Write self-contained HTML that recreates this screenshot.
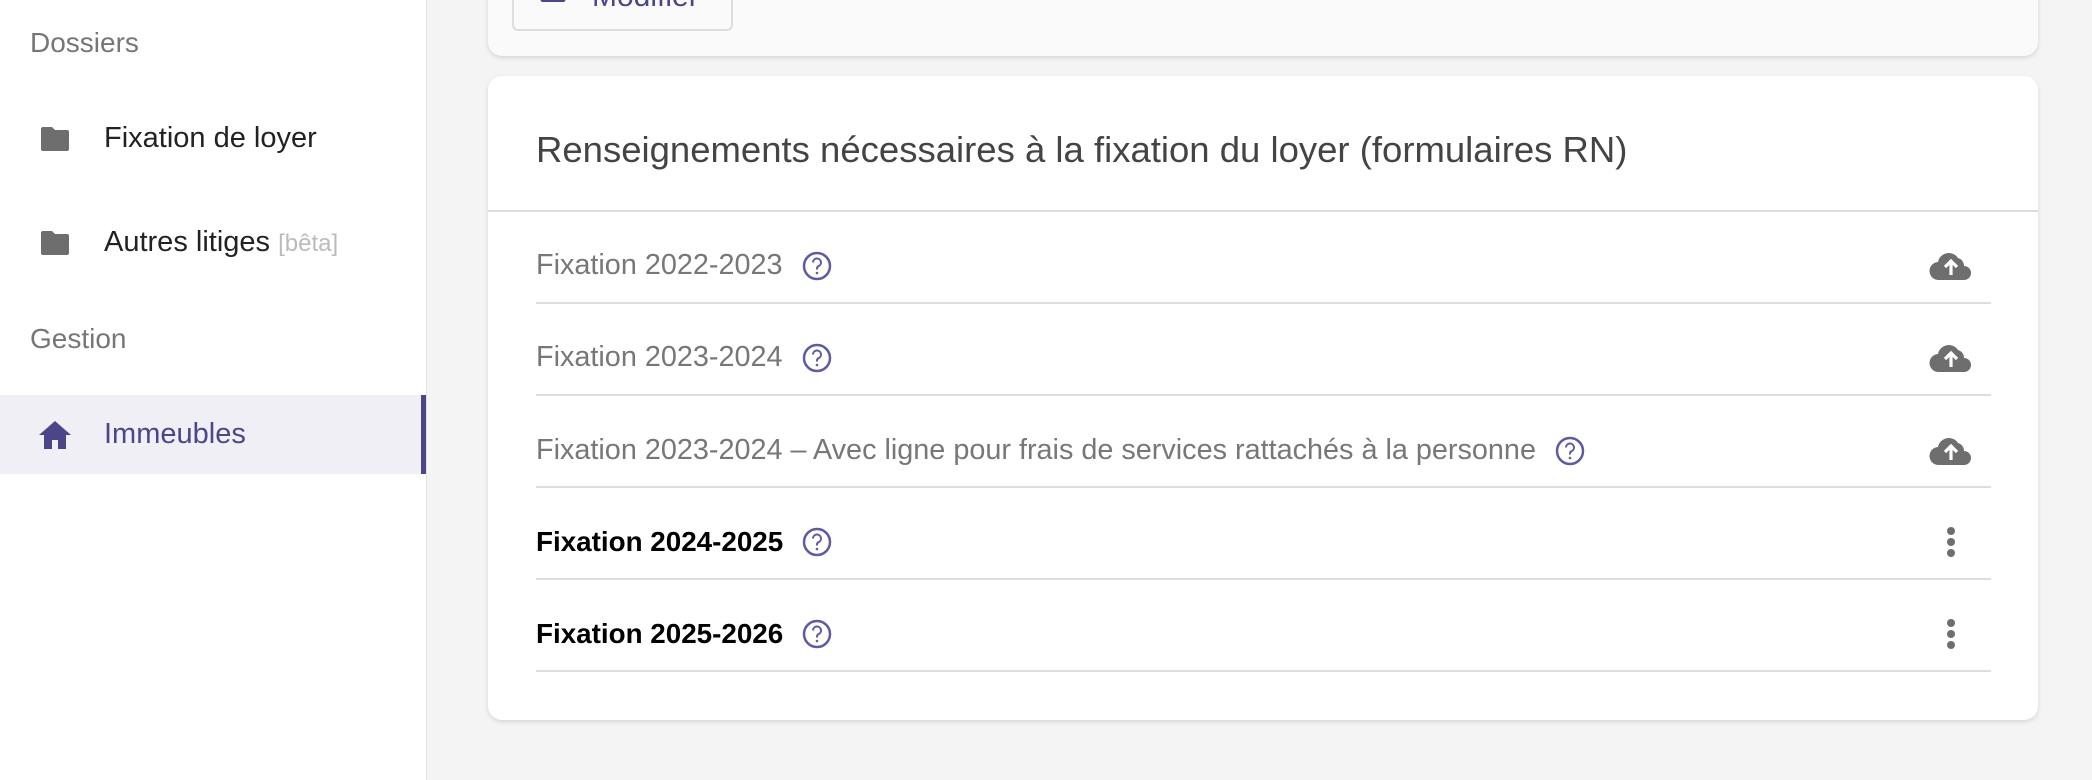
<!DOCTYPE html>
<html><head><meta charset="utf-8"><style>
*{margin:0;padding:0;box-sizing:border-box}
body{width:2092px;height:780px;overflow:hidden;background:#f4f4f4;font-family:"Liberation Sans",sans-serif;position:relative}
.side{position:absolute;left:0;top:0;width:427px;height:780px;background:#fff;border-right:1px solid #e2e2e2}
.abs{position:absolute;white-space:nowrap}
.sec{color:#767676;font-size:28px;left:30px}
.item{color:#222;font-size:29px;left:104px}
.active{position:absolute;left:0;top:395px;width:426px;height:79px;background:#f0eff5;border-right:5px solid #4a4688}
.card1{position:absolute;left:488px;top:-20px;width:1550px;height:76px;background:#fafafa;border-radius:14px;box-shadow:0 2px 5px rgba(0,0,0,.12)}
.btn{position:absolute;left:24px;top:0;width:221px;height:51px;border:2px solid #ddd;border-radius:6px}
.card2{position:absolute;left:488px;top:76px;width:1550px;height:644px;background:#fff;border-radius:14px;box-shadow:0 2px 5px rgba(0,0,0,.12)}
.hd{position:absolute;left:48px;top:53px;font-size:36.5px;color:#444}
.hline{position:absolute;left:0;top:134px;width:1550px;height:2px;background:#ddd}
.row{position:absolute;left:48px;width:1455px;height:2px;background:#ddd}
.t{position:absolute;left:48px;font-size:28.8px;color:#777;white-space:nowrap;display:flex;align-items:center}
.t.b{color:#000;font-weight:bold;font-size:27.8px}
.q{display:inline-block;width:30px;height:30px;margin-left:19px}
.ic{position:absolute}
</style></head><body>
<div class="side">
  <div class="abs sec" style="top:27px">Dossiers</div>
  <svg class="ic" style="left:40px;top:126px" width="30" height="26" viewBox="0 0 30 26"><path d="M3 1h9l3 3h12a2 2 0 0 1 2 2v17a2 2 0 0 1-2 2H3a2 2 0 0 1-2-2V3a2 2 0 0 1 2-2z" fill="#6e6e6e"/></svg>
  <div class="abs item" style="top:122px">Fixation de loyer</div>
  <svg class="ic" style="left:40px;top:230px" width="30" height="26" viewBox="0 0 30 26"><path d="M3 1h9l3 3h12a2 2 0 0 1 2 2v17a2 2 0 0 1-2 2H3a2 2 0 0 1-2-2V3a2 2 0 0 1 2-2z" fill="#6e6e6e"/></svg>
  <div class="abs item" style="top:226px">Autres litiges <span style="color:#bbb;font-size:24px">[bêta]</span></div>
  <div class="abs sec" style="top:323px">Gestion</div>
  <div class="active"></div>
  <svg class="ic" style="left:38px;top:420px" width="34" height="30" viewBox="0 0 34 30"><path d="M17 1L1 15h5v14h8v-9h6v9h8V15h5z" fill="#4a4688"/></svg>
  <div class="abs item" style="top:418px;color:#4a4688">Immeubles</div>
</div>
<div class="card1"><div class="btn">
  <svg class="ic" style="left:25px;top:8px" width="28" height="12" viewBox="0 0 28 12"><path d="M3 0v8a3 3 0 0 0 3 3h16a3 3 0 0 0 3-3V0" fill="none" stroke="#4a4688" stroke-width="4"/></svg>
  <div class="abs" style="left:78px;top:-2px;font-size:30px;color:#4a4688">Modifier</div>
</div></div>
<div class="card2">
  <div class="hd">Renseignements nécessaires à la fixation du loyer (formulaires RN)</div>
  <div class="hline"></div>
</div>
<svg width="0" height="0" style="position:absolute"><defs>
<symbol id="qq" viewBox="0 0 30 30"><circle cx="15" cy="15" r="13" fill="none" stroke="#5e5ba3" stroke-width="2.5"/><path d="M11 11.5a4 4 0 1 1 5.5 3.7c-1 .5-1.5 1.2-1.5 2.3v1" fill="none" stroke="#5e5ba3" stroke-width="2"/><circle cx="15" cy="22" r="1.3" fill="#5e5ba3"/></symbol>
<symbol id="cl" viewBox="0 0 44 32"><path d="M10 31a9 9 0 0 1-1-18 11 11 0 0 1 20-4 8 8 0 0 1 6 8 7 7 0 0 1 0 14z" fill="#6e6e6e"/><path d="M22 26V13M16 18l6-6 6 6" fill="none" stroke="#fff" stroke-width="3.2"/></symbol>
<symbol id="dt" viewBox="0 0 10 34"><circle cx="5" cy="5" r="4" fill="#6e6e6e"/><circle cx="5" cy="16" r="4" fill="#6e6e6e"/><circle cx="5" cy="27" r="4" fill="#6e6e6e"/></symbol>
</defs></svg>

<div class="t" style="left:536px;top:249px">Fixation 2022-2023<svg class="q"><use href="#qq"/></svg></div>
<svg class="ic" style="left:1929px;top:249px" width="44" height="32"><use href="#cl"/></svg>
<div class="row" style="left:536px;top:302px"></div>

<div class="t" style="left:536px;top:341px">Fixation 2023-2024<svg class="q"><use href="#qq"/></svg></div>
<svg class="ic" style="left:1929px;top:341px" width="44" height="32"><use href="#cl"/></svg>
<div class="row" style="left:536px;top:394px"></div>

<div class="t" style="left:536px;top:434px">Fixation 2023-2024 – Avec ligne pour frais de services rattachés à la personne<svg class="q"><use href="#qq"/></svg></div>
<svg class="ic" style="left:1929px;top:434px" width="44" height="32"><use href="#cl"/></svg>
<div class="row" style="left:536px;top:486px"></div>

<div class="t b" style="left:536px;top:526px">Fixation 2024-2025<svg class="q"><use href="#qq"/></svg></div>
<svg class="ic" style="left:1946px;top:526px" width="10" height="34"><use href="#dt"/></svg>
<div class="row" style="left:536px;top:578px"></div>

<div class="t b" style="left:536px;top:618px">Fixation 2025-2026<svg class="q"><use href="#qq"/></svg></div>
<svg class="ic" style="left:1946px;top:618px" width="10" height="34"><use href="#dt"/></svg>
<div class="row" style="left:536px;top:670px"></div>
</body></html>
